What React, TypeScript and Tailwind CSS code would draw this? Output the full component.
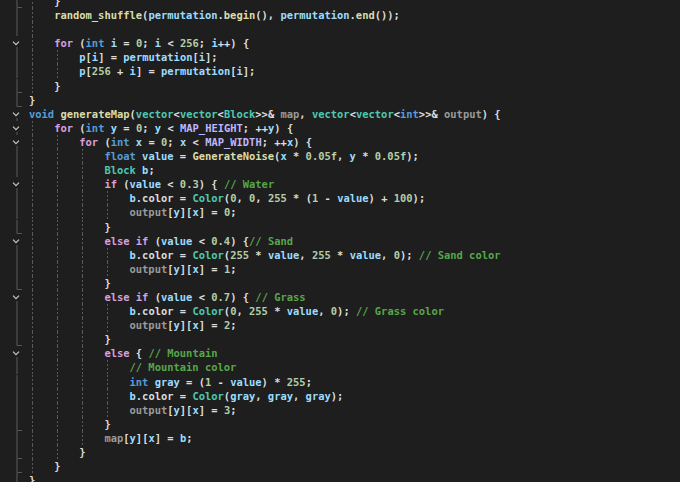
import React from "react";

// Source lines as shown in the editor (4-space indents)
const LINES = [
  "    }",
  "    random_shuffle(permutation.begin(), permutation.end());",
  "",
  "    for (int i = 0; i < 256; i++) {",
  "        p[i] = permutation[i];",
  "        p[256 + i] = permutation[i];",
  "    }",
  "}",
  "void generateMap(vector<vector<Block>>& map, vector<vector<int>>& output) {",
  "    for (int y = 0; y < MAP_HEIGHT; ++y) {",
  "        for (int x = 0; x < MAP_WIDTH; ++x) {",
  "            float value = GenerateNoise(x * 0.05f, y * 0.05f);",
  "            Block b;",
  "            if (value < 0.3) { // Water",
  "                b.color = Color(0, 0, 255 * (1 - value) + 100);",
  "                output[y][x] = 0;",
  "            }",
  "            else if (value < 0.4) {// Sand",
  "                b.color = Color(255 * value, 255 * value, 0); // Sand color",
  "                output[y][x] = 1;",
  "            }",
  "            else if (value < 0.7) { // Grass",
  "                b.color = Color(0, 255 * value, 0); // Grass color",
  "                output[y][x] = 2;",
  "            }",
  "            else { // Mountain",
  "                // Mountain color",
  "                int gray = (1 - value) * 255;",
  "                b.color = Color(gray, gray, gray);",
  "                output[y][x] = 3;",
  "            }",
  "            map[y][x] = b;",
  "        }",
  "    }",
  "}",
];

const CONTROL = ["for", "if", "else"];
const KEYWORDS = ["int", "void", "float"];
const TYPES = ["vector", "Block", "Color"];
const FUNCS = ["random_shuffle", "begin", "end", "generateMap", "GenerateNoise"];
const MACROS = ["MAP_HEIGHT", "MAP_WIDTH"];
const PARAMS = ["map", "output"];
const FIELDS = ["color"];

function classify(tok: string): string {
  if (tok.startsWith("//")) return "text-[#57A64A]";
  if (/^\d/.test(tok)) return "text-[#B5CEA8]";
  if (CONTROL.includes(tok)) return "text-[#D8A0DF]";
  if (KEYWORDS.includes(tok)) return "text-[#569CD6]";
  if (TYPES.includes(tok)) return "text-[#4EC9B0]";
  if (FUNCS.includes(tok)) return "text-[#DCDCAA]";
  if (MACROS.includes(tok)) return "text-[#BEB7FF]";
  if (PARAMS.includes(tok)) return "text-[#9A9A9A]";
  if (FIELDS.includes(tok)) return "text-[#DADADA]";
  if (/^[A-Za-z_]/.test(tok)) return "text-[#9CDCFE]";
  return "text-[#DCDCDC]";
}

function tokenize(src: string): string[] {
  return src.match(/\/\/.*$|\d[\d.]*f?|[A-Za-z_]\w*|\s+|./g) ?? [];
}

type Row = {
  text: string;
  indent: number;
  guides: number[];
  start: boolean;
  end: boolean;
  inside: boolean;
};

// work out indent guides and outlining marks
function buildRows(): Row[] {
  const stack = [0, 1]; // blocks opened above the visible area
  return LINES.map((raw) => {
    const lead = raw.length - raw.trimStart().length;
    const indent = Math.floor(lead / 4);
    const trimmed = raw.trim();
    const end = trimmed.startsWith("}");
    if (end) stack.pop();
    const guides = [...stack];
    const inside = stack.length > 0;
    const start = raw.includes("{");
    if (start) stack.push(indent);
    return { text: raw.slice(indent * 4), indent, guides, start, end, inside };
  });
}

const Gutter = ({ row }: { row: Row }) => (
  <svg className="w-[29px] h-full shrink-0" viewBox="0 0 29 14.1">
    {row.start ? (
      <>
        <polyline
          points="13,5.6 16,8.6 19,5.6"
          fill="none"
          stroke="#c8c8c8"
          strokeWidth="1.2"
        />
        <line x1="17" y1="11" x2="17" y2="14.1" stroke="#5c5c5c" />
      </>
    ) : (row.inside || row.end) ? (
      <line x1="17" y1="0" x2="17" y2={row.end ? 13.6 : 14.1} stroke="#5c5c5c" />
    ) : null}
    {row.end && <line x1="17" y1="13.6" x2="22" y2="13.6" stroke="#5c5c5c" />}
  </svg>
);

const CodeLine = ({ row }: { row: Row }) => {
  const chunks = Math.max(row.indent, row.guides.length ? Math.max(...row.guides) + 1 : 0);
  return (
    <div className="flex h-[14.1px]">
      <Gutter row={row} />
      {Array.from({ length: chunks }).map((_, i) => (
        <span key={i} className="w-[4ch] h-full shrink-0 flex">
          {row.guides.includes(i) && (
            <span className="ml-[2.5px] w-px h-full bg-[repeating-linear-gradient(to_bottom,#5a5a5a_0_2px,transparent_2px_4px)]" />
          )}
        </span>
      ))}
      <span className="whitespace-pre leading-[14.1px]">
        {tokenize(row.text).map((t, i) => (
          <span key={i} className={classify(t)}>
            {t}
          </span>
        ))}
      </span>
    </div>
  );
};

export default function App() {
  const rows = buildRows();
  return (
    <div className="w-[680px] h-[482px] overflow-hidden bg-[#1e1e1e] font-['DejaVu_Sans_Mono',monospace] text-[10.45px] font-bold">
      <div className="-mt-[6px]">
        {rows.map((row, i) => (
          <CodeLine key={i} row={row} />
        ))}
      </div>
    </div>
  );
}
